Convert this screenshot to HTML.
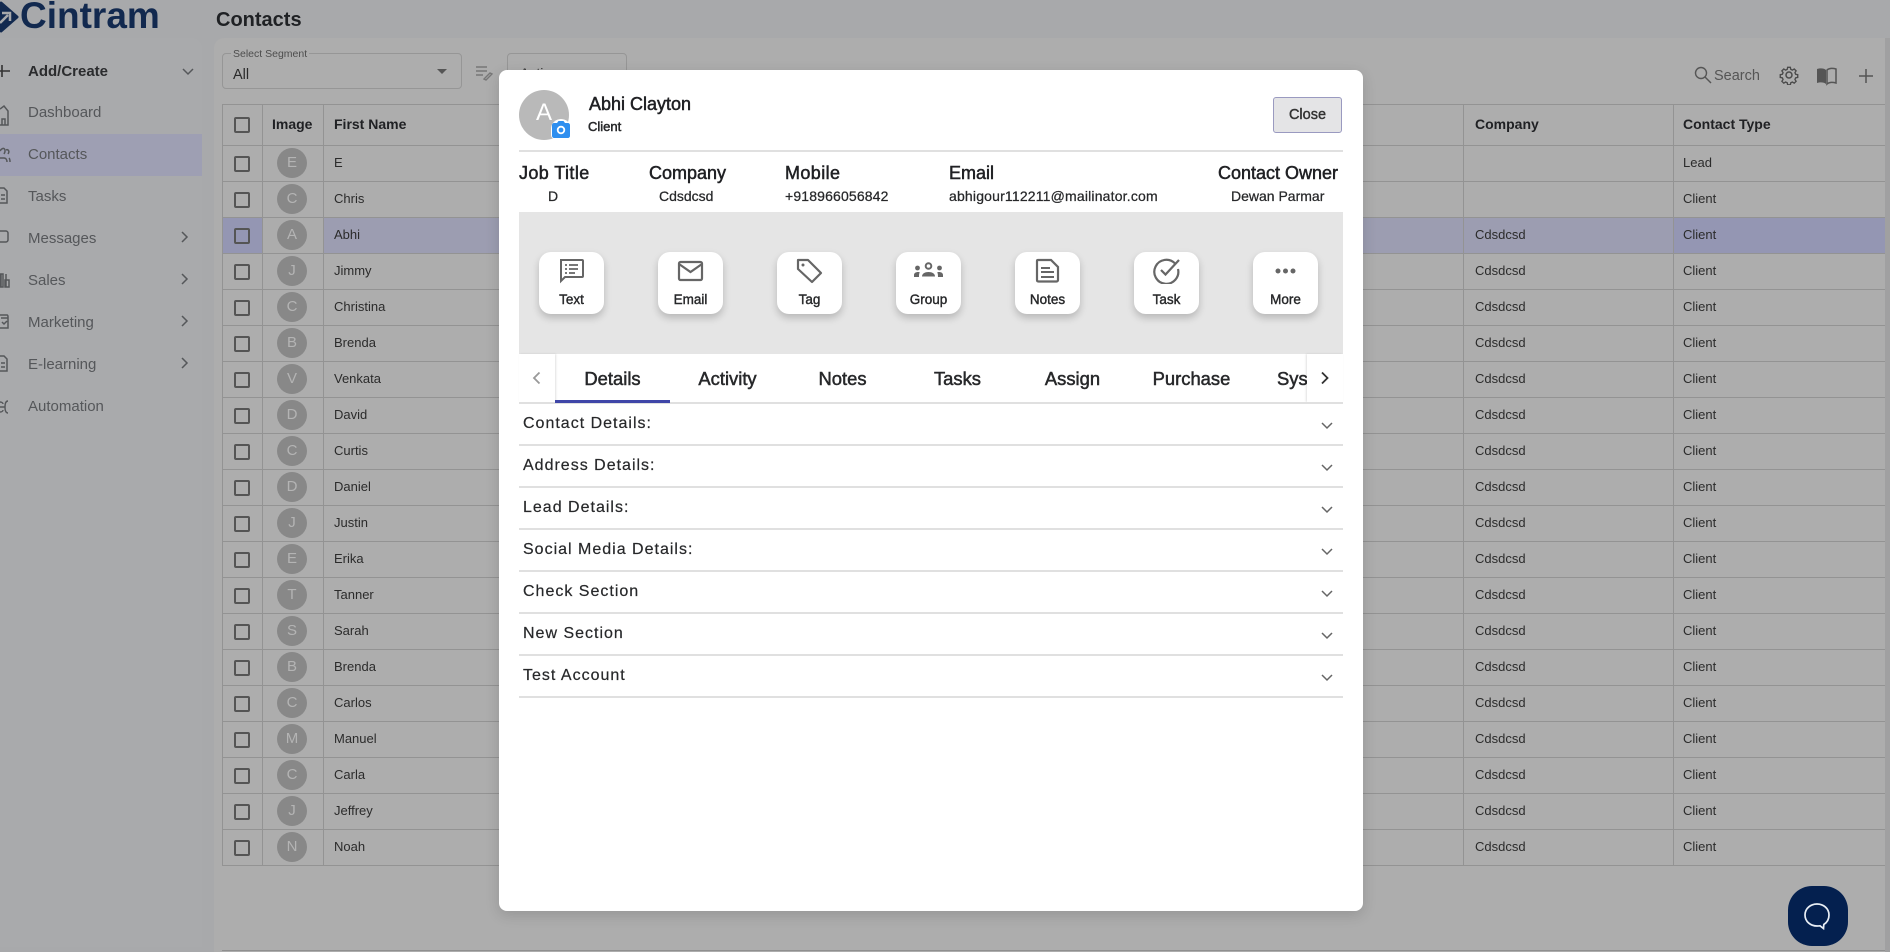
<!DOCTYPE html>
<html lang="en"><head><meta charset="utf-8"><title>Contacts</title>
<style>
*{box-sizing:border-box}
html,body{margin:0;padding:0;width:1890px;height:952px;overflow:hidden;background:#a8a9ab;font-family:"Liberation Sans",sans-serif}
.a{position:absolute;white-space:nowrap}
.t{line-height:20px;height:20px}
.m{-webkit-text-stroke:.5px currentColor}
#side{position:absolute;left:0;top:38px;width:202px;height:909px;background:#a9aaac;border-radius:0 10px 0 0}
#main{position:absolute;left:214px;top:38px;width:1671px;height:914px;background:#adadad;border-radius:10px 0 0 0}
#strip{position:absolute;left:1885px;top:38px;width:5px;height:914px;background:#a0a0a1}
.nav{position:absolute;left:28px;font-size:15px;line-height:20px;color:#55575a}
table{position:absolute;left:222px;top:104px;width:1663px;table-layout:fixed;border-collapse:separate;border-spacing:0;border-top:1px solid #939393;border-left:1px solid #939393}
th,td{padding:0 0 0 11px;text-align:left;border-bottom:1px solid #939393;border-right:1px solid #939393;position:relative;overflow:hidden;white-space:nowrap}
th{height:41px;font-size:14px;color:#202124;font-weight:700;padding-bottom:3px}
td{height:36px;font-size:13px;color:#2b2b2b;padding-bottom:3px}
th:nth-child(3),td:nth-child(3){padding-left:10px}
td:last-child,th:last-child{border-right:0;padding-left:9px}
.c{position:absolute;left:11px;top:10px;width:16px;height:16px;border:2px solid #555;border-radius:2px}
th .c{top:12px}
.v{position:absolute;left:14px;top:2px;width:30px;height:30px;border-radius:50%;background:#888;color:#b4b4b4;text-align:center;line-height:29px;font-size:15px}
tr.s td{background:#9c9db1}
tr.s td:nth-child(1),tr.s td:nth-child(5){background:#9496b3}
tr.s td:nth-child(2){background:#acacac}
#modal{position:absolute;left:499px;top:70px;width:864px;height:841px;background:#fff;border-radius:8px;box-shadow:0 4px 14px rgba(0,0,0,.14)}
.hl{position:absolute;font-size:18px;line-height:22px;color:#202124;white-space:nowrap}
.hv{position:absolute;font-size:14px;line-height:18px;color:#27282a;white-space:nowrap;-webkit-text-stroke:.25px currentColor}
.btn{position:absolute;top:182px;width:65px;height:62px;background:#fff;border-radius:12px;box-shadow:0 4px 8px rgba(0,0,0,.2);text-align:center}
.btn span{position:absolute;left:0;right:0;top:38px;font-size:13.5px;line-height:20px;color:#27282a;-webkit-text-stroke:.4px currentColor}
.btn svg{position:absolute;left:19px;top:5px}
.tab{position:absolute;top:298px;font-size:18.4px;line-height:22px;color:#27282a;text-align:center;white-space:nowrap;-webkit-text-stroke:.5px currentColor}
.acc{position:absolute;left:20px;width:824px;height:42px;border-bottom:2px solid #e0e0e0}
.acc b{position:absolute;left:4px;top:9px;font-weight:400;font-size:16px;line-height:22px;letter-spacing:1px;color:#27282a;-webkit-text-stroke:.2px currentColor}
.acc svg{position:absolute;left:801px;top:17px}
</style></head><body>

<div id="side"></div><div id="main"></div><div id="strip"></div>

<svg class="a" style="left:-8px;top:0" width="28" height="34" viewBox="0 0 28 34"><path d="M9 3 L25 17 L9 31 L-8 17 Z" fill="#12294f" stroke="#12294f" stroke-width="3" stroke-linejoin="round"/><path d="M8 23 L16 15 M10 13 H18 V21" stroke="#a8a9ab" stroke-width="2.500" fill="none"/></svg>
<div class="a" style="left:20px;top:-7px;font-size:37px;line-height:46px;font-weight:700;color:#12294f">Cintram</div>
<div class="a t" style="left:216px;top:10px;font-size:20px;font-weight:700;color:#1f2124">Contacts</div>

<div class="a" style="left:0;top:134px;width:202px;height:42px;background:#9e9fb3"></div>
<div class="nav" style="top:62px;color:#2b2c2e;font-weight:700">Add/Create</div>
<div class="nav" style="top:103px">Dashboard</div>
<div class="nav" style="top:145px">Contacts</div>
<div class="nav" style="top:187px">Tasks</div>
<div class="nav" style="top:229px">Messages</div>
<div class="nav" style="top:271px">Sales</div>
<div class="nav" style="top:313px">Marketing</div>
<div class="nav" style="top:355px">E-learning</div>
<div class="nav" style="top:397px">Automation</div>

<svg class="a" style="left:0;top:60px" width="205" height="360" viewBox="0 0 205 360" fill="none" stroke="#55575a" stroke-width="1.500">
<path d="M0 11H10M2 5V17" stroke="#333" stroke-width="1.600"/>
<path d="M183 9l5 5 5-5"/>
<path d="M0 49l4-3 4 5v14H0M2 65v-6h3v6"/>
<path d="M0 91c3-5 7-2 4 3M0 98h4c2 0 3 2 3 4M6 90c2-1 4 1 2 4M9 98c1 1 1 3 1 4"/>
<path d="M0 128h4l3 3v12H0M1 135h4M1 139h4"/>
<path d="M0 171h6c1 0 2 1 2 2v7c0 1-1 2-2 2H0"/>
<path d="M1 214v13M6 214v13M0 214h3v13H0zM5 220h4v7H5z"/>
<path d="M0 255h7c1 0 1 1 1 2v11H0M1 258h7M2 262l2 2 3-3"/>
<path d="M0 296h4l3 3v12H0M1 303h4M1 307h4"/>
<path d="M0 347h5M5 347c0-4 1-6 3-6M5 347c0 4 1 6 3 6M0 342c2 0 3 1 3 2M0 352c2 0 3-1 3-2" stroke-width="1.400"/>
<path d="M182 172l5 5-5 5M182 214l5 5-5 5M182 256l5 5-5 5M182 298l5 5-5 5"/>
</svg>

<!-- Toolbar -->
<div class="a" style="left:222px;top:53px;width:240px;height:36px;border:1px solid #969696;border-radius:4px"></div>
<div class="a" style="left:231px;top:47px;padding:0 2px;background:#adadad;font-size:10.500px;line-height:14px;color:#4d4d4d">Select Segment</div>
<div class="a t" style="left:233px;top:65px;font-size:14.500px;color:#2a2a2a">All</div>
<div class="a" style="left:437px;top:69px;border-left:5px solid transparent;border-right:5px solid transparent;border-top:5px solid #555"></div>
<svg class="a" style="left:475px;top:64px" width="20" height="18" viewBox="0 0 20 18" fill="none" stroke="#777" stroke-width="1.400"><path d="M1 3H12M1 7H12M1 11H8M9 15l6-6 2 1-6 6z"/></svg>
<div class="a" style="left:507px;top:53px;width:120px;height:36px;border:1px solid #969696;border-radius:4px"></div>
<div class="a t" style="left:520px;top:63px;font-size:14px;color:#333">Actions</div>

<svg class="a" style="left:1693px;top:65px" width="20" height="20" viewBox="0 0 20 20" fill="none" stroke="#555" stroke-width="1.400"><circle cx="8" cy="8" r="5.500"/><path d="M12 12l6 6"/></svg>
<div class="a t" style="left:1714px;top:66px;font-size:14.500px;color:#555">Search</div>
<svg class="a" style="left:1779px;top:65px" width="20" height="20" viewBox="0 0 20 20" fill="none" stroke="#4a4a4a" stroke-width="1.500"><circle cx="10" cy="10" r="3"/><path d="M8.500 1.500h3l.5 2.300 1.800.8 2-1.300 2.100 2.100-1.300 2 .8 1.800 2.300.5v3l-2.300.5-.8 1.800 1.300 2-2.100 2.100-2-1.300-1.800.8-.5 2.300h-3l-.5-2.300-1.800-.8-2 1.300-2.100-2.100 1.300-2-.8-1.800-2.300-.5v-3l2.300-.5.8-1.800-1.300-2 2.100-2.100 2 1.300 1.800-.8z" transform="translate(1 1) scale(.9)"/></svg>
<svg class="a" style="left:1816px;top:66px" width="22" height="20" viewBox="0 0 22 20"><path d="M1 3c3-1 7-1 9 1v14c-2-2-6-2-9-1z" fill="#555"/><path d="M11 4c2-2 6-2 9-1v14c-3-1-7-1-9 1z" fill="none" stroke="#555" stroke-width="1.500"/></svg>
<svg class="a" style="left:1859px;top:69px" width="14" height="14" viewBox="0 0 14 14" stroke="#555" stroke-width="1.500"><path d="M0 7H14M7 0V14"/></svg>

<table>
<colgroup><col style="width:40px"><col style="width:61px"><col style="width:1140px"><col style="width:210px"><col></colgroup>
<tr><th><i class="c"></i></th><th style="padding-left:9px">Image</th><th>First Name</th><th>Company</th><th>Contact Type</th></tr>
<tr><td><i class="c"></i></td><td><div class="v">E</div></td><td>E</td><td></td><td>Lead</td></tr>
<tr><td><i class="c"></i></td><td><div class="v">C</div></td><td>Chris</td><td></td><td>Client</td></tr>
<tr class="s"><td><i class="c"></i></td><td><div class="v">A</div></td><td>Abhi</td><td>Cdsdcsd</td><td>Client</td></tr>
<tr><td><i class="c"></i></td><td><div class="v">J</div></td><td>Jimmy</td><td>Cdsdcsd</td><td>Client</td></tr>
<tr><td><i class="c"></i></td><td><div class="v">C</div></td><td>Christina</td><td>Cdsdcsd</td><td>Client</td></tr>
<tr><td><i class="c"></i></td><td><div class="v">B</div></td><td>Brenda</td><td>Cdsdcsd</td><td>Client</td></tr>
<tr><td><i class="c"></i></td><td><div class="v">V</div></td><td>Venkata</td><td>Cdsdcsd</td><td>Client</td></tr>
<tr><td><i class="c"></i></td><td><div class="v">D</div></td><td>David</td><td>Cdsdcsd</td><td>Client</td></tr>
<tr><td><i class="c"></i></td><td><div class="v">C</div></td><td>Curtis</td><td>Cdsdcsd</td><td>Client</td></tr>
<tr><td><i class="c"></i></td><td><div class="v">D</div></td><td>Daniel</td><td>Cdsdcsd</td><td>Client</td></tr>
<tr><td><i class="c"></i></td><td><div class="v">J</div></td><td>Justin</td><td>Cdsdcsd</td><td>Client</td></tr>
<tr><td><i class="c"></i></td><td><div class="v">E</div></td><td>Erika</td><td>Cdsdcsd</td><td>Client</td></tr>
<tr><td><i class="c"></i></td><td><div class="v">T</div></td><td>Tanner</td><td>Cdsdcsd</td><td>Client</td></tr>
<tr><td><i class="c"></i></td><td><div class="v">S</div></td><td>Sarah</td><td>Cdsdcsd</td><td>Client</td></tr>
<tr><td><i class="c"></i></td><td><div class="v">B</div></td><td>Brenda</td><td>Cdsdcsd</td><td>Client</td></tr>
<tr><td><i class="c"></i></td><td><div class="v">C</div></td><td>Carlos</td><td>Cdsdcsd</td><td>Client</td></tr>
<tr><td><i class="c"></i></td><td><div class="v">M</div></td><td>Manuel</td><td>Cdsdcsd</td><td>Client</td></tr>
<tr><td><i class="c"></i></td><td><div class="v">C</div></td><td>Carla</td><td>Cdsdcsd</td><td>Client</td></tr>
<tr><td><i class="c"></i></td><td><div class="v">J</div></td><td>Jeffrey</td><td>Cdsdcsd</td><td>Client</td></tr>
<tr><td><i class="c"></i></td><td><div class="v">N</div></td><td>Noah</td><td>Cdsdcsd</td><td>Client</td></tr>
</table>

<div class="a" style="left:222px;top:950px;width:1663px;height:1px;background:#8f8f8f"></div>

<div class="a" style="left:1788px;top:886px;width:60px;height:60px;border-radius:24px;background:#04204f"></div>
<svg class="a" style="left:1803px;top:902px" width="28" height="28" viewBox="0 0 28 28" fill="none" stroke="#e8eef5" stroke-width="1.700"><path d="M14 2C7.500 2 2 6.500 2 13s5.500 11 12 11c1 0 2 0 3-.2l3.500 2.700.3-4C24 20.500 26 17 26 13 26 6.500 20.500 2 14 2z"/></svg>

<div id="modal">
  <div class="a" style="left:20px;top:20px;width:50px;height:50px;border-radius:50%;background:#b9b9b9;color:#fff;font-size:24px;line-height:46px;text-align:center">A</div>
  <div class="a" style="left:52px;top:49px;width:20px;height:20px;border-radius:50% 50% 4px 4px;background:#fff"></div>
  <svg class="a" style="left:53px;top:50px" width="18" height="18" viewBox="0 0 18 18"><path d="M2 3h3l1.500-2h5L13 3h3c1 0 2 1 2 2v11c0 1-1 2-2 2H2c-1 0-2-1-2-2V5c0-1 1-2 2-2z" fill="#2f8fef"/><circle cx="9" cy="10" r="3.300" fill="none" stroke="#fff" stroke-width="1.800"/></svg>
  <div class="hl m" style="left:90px;top:23px">Abhi Clayton</div>
  <div class="a m" style="left:89px;top:48px;font-size:13px;line-height:18px;color:#27282a">Client</div>

  <div class="a" style="left:774px;top:27px;width:69px;height:36px;background:#e4e4e6;border:1px solid #9a9ac0;border-radius:3px;font-size:14.500px;line-height:34px;text-align:center;color:#333;-webkit-text-stroke:.4px #333">Close</div>

  <div class="a" style="left:20px;top:80px;width:824px;height:2px;background:#e0e0e0"></div>

  <div class="hl m" style="left:20px;top:92px;letter-spacing:.4px">Job Title</div>
  <div class="hl m" style="left:150px;top:92px">Company</div>
  <div class="hl m" style="left:286px;top:92px;letter-spacing:.4px">Mobile</div>
  <div class="hl m" style="left:450px;top:92px">Email</div>
  <div class="hl m" style="left:719px;top:92px">Contact Owner</div>
  <div class="hv" style="left:49px;top:117px">D</div>
  <div class="hv" style="left:160px;top:117px">Cdsdcsd</div>
  <div class="hv" style="left:286px;top:117px;letter-spacing:.15px">+918966056842</div>
  <div class="hv" style="left:450px;top:117px;letter-spacing:.18px">abhigour112211@mailinator.com</div>
  <div class="hv" style="left:732px;top:117px">Dewan Parmar</div>

  <div class="a" style="left:20px;top:142px;width:824px;height:142px;background:#e5e5e5"></div>

  <div class="btn" style="left:40px"><svg width="27" height="27" viewBox="0 0 27 27" fill="none" stroke="#666" stroke-width="2"><path d="M3 3h21c.6 0 1 .4 1 1v15c0 .6-.4 1-1 1H7l-4 4z"/><path d="M7 8h2M11 8h9M7 12h2M11 12h9M7 16h2M11 16h6" stroke-width="1.800"/></svg><span>Text</span></div>
  <div class="btn" style="left:159px"><svg width="27" height="27" viewBox="0 0 27 27" fill="none" stroke="#666" stroke-width="2.200"><rect x="2" y="5" width="23" height="18" rx="1.500"/><path d="M2 7l11.500 8L25 7"/></svg><span>Email</span></div>
  <div class="btn" style="left:278px"><svg width="27" height="27" viewBox="0 0 27 27" fill="none" stroke="#666" stroke-width="2.200"><path d="M2 3h10l13 13-9 9L2 12z" stroke-linejoin="round"/><circle cx="7" cy="8" r="1.500" fill="#666" stroke="none"/></svg><span>Tag</span></div>
  <div class="btn" style="left:397px"><svg style="left:17px" width="31" height="27" viewBox="0 0 31 27" fill="#666"><circle cx="15.500" cy="9" r="2.800" fill="none" stroke="#666" stroke-width="2"/><circle cx="4.500" cy="11" r="2.400"/><circle cx="26.500" cy="11" r="2.400"/><path d="M1 20v-2c0-2 2-3 4-3 1 0 1.500.2 1.800.4-.6 1-.8 2-.8 4.600zM30 20v-2c0-2-2-3-4-3-1 0-1.500.2-1.800.4.600 1 .8 2 .8 4.600z"/><path d="M9 19.500c0-3 3-4.500 6.500-4.500s6.500 1.500 6.500 4.500z" fill="#666"/></svg><span>Group</span></div>
  <div class="btn" style="left:516px"><svg width="27" height="27" viewBox="0 0 27 27" fill="none" stroke="#666" stroke-width="2.200"><path d="M4 3h13l7 7v13c0 .8-.5 1.500-1.500 1.500h-18C3.500 24.500 3 24 3 23V4c0-.6.4-1 1-1z"/><path d="M7 11h9M7 15h13M7 20h13" stroke-width="2"/></svg><span>Notes</span></div>
  <div class="btn" style="left:635px"><svg width="27" height="27" viewBox="0 0 27 27" fill="none" stroke="#666" stroke-width="2.200"><path d="M22 6.500A12 12 0 1 0 25 12"/><path d="M8 13l4.500 4.500L26 3"/></svg><span>Task</span></div>
  <div class="btn" style="left:754px"><svg width="27" height="27" viewBox="0 0 27 27" fill="#666"><circle cx="6" cy="14" r="2.500"/><circle cx="13.500" cy="14" r="2.500"/><circle cx="21" cy="14" r="2.500"/></svg><span>More</span></div>

  <div class="tab" style="left:56px;width:115px">Details</div>
  <div class="tab" style="left:171px;width:115px">Activity</div>
  <div class="tab" style="left:286px;width:115px">Notes</div>
  <div class="tab" style="left:401px;width:115px">Tasks</div>
  <div class="tab" style="left:516px;width:115px">Assign</div>
  <div class="tab" style="left:635px;width:115px">Purchase</div>
  <div class="tab" style="left:778px">System</div>
  <div class="a" style="left:20px;top:284px;width:36px;height:48px;background:#fff;box-shadow:1px 0 2px rgba(0,0,0,.12)"></div>
  <div class="a" style="left:808px;top:284px;width:36px;height:48px;background:#fff;box-shadow:-1px 0 2px rgba(0,0,0,.12)"></div>
  <svg class="a" style="left:33px;top:301px" width="10" height="14" viewBox="0 0 10 14" fill="none" stroke="#999" stroke-width="1.800"><path d="M7.500 1.500L2 7l5.500 5.500"/></svg>
  <svg class="a" style="left:821px;top:301px" width="10" height="14" viewBox="0 0 10 14" fill="none" stroke="#333" stroke-width="1.800"><path d="M2 1.500L7.500 7 2 12.500"/></svg>
  <div class="a" style="left:20px;top:332px;width:824px;height:2px;background:#e0e0e0"></div>
  <div class="a" style="left:56px;top:330px;width:115px;height:3px;background:#3f46a8"></div>

  <div class="acc" style="top:334px"><b>Contact Details:</b><svg width="14" height="10" viewBox="0 0 14 10" fill="none" stroke="#666" stroke-width="1.500"><path d="M2 2l5 5 5-5"/></svg></div>
  <div class="acc" style="top:376px"><b>Address Details:</b><svg width="14" height="10" viewBox="0 0 14 10" fill="none" stroke="#666" stroke-width="1.500"><path d="M2 2l5 5 5-5"/></svg></div>
  <div class="acc" style="top:418px"><b>Lead Details:</b><svg width="14" height="10" viewBox="0 0 14 10" fill="none" stroke="#666" stroke-width="1.500"><path d="M2 2l5 5 5-5"/></svg></div>
  <div class="acc" style="top:460px"><b>Social Media Details:</b><svg width="14" height="10" viewBox="0 0 14 10" fill="none" stroke="#666" stroke-width="1.500"><path d="M2 2l5 5 5-5"/></svg></div>
  <div class="acc" style="top:502px"><b>Check Section</b><svg width="14" height="10" viewBox="0 0 14 10" fill="none" stroke="#666" stroke-width="1.500"><path d="M2 2l5 5 5-5"/></svg></div>
  <div class="acc" style="top:544px"><b>New Section</b><svg width="14" height="10" viewBox="0 0 14 10" fill="none" stroke="#666" stroke-width="1.500"><path d="M2 2l5 5 5-5"/></svg></div>
  <div class="acc" style="top:586px"><b>Test Account</b><svg width="14" height="10" viewBox="0 0 14 10" fill="none" stroke="#666" stroke-width="1.500"><path d="M2 2l5 5 5-5"/></svg></div>
</div>
</body></html>
